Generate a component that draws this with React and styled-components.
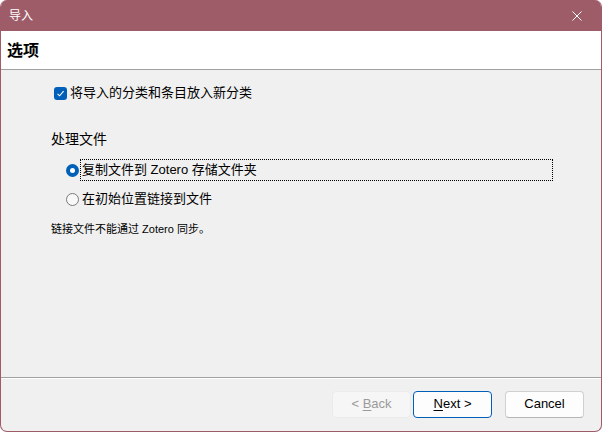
import styled, { createGlobalStyle } from 'styled-components';

const GlobalStyle = createGlobalStyle`
    html, body {
        margin: 0;
        padding: 0;
        background: #ffffff;
    }
    * {
        box-sizing: border-box;
    }
`

const FONT = `"Liberation Sans", "Noto Sans CJK SC", sans-serif`;

export default function App(){
    return(
        <>
            <GlobalStyle />
            <Window>
                <TitleBar>
                    <TitleText>导入</TitleText>
                    <CloseIcon viewBox="0 0 10 10">
                        <path d="M0.5 0.5 L9.5 9.5 M9.5 0.5 L0.5 9.5" stroke="#ffffff" strokeWidth="1" />
                    </CloseIcon>
                </TitleBar>
                <Header>
                    <PageTitle>选项</PageTitle>
                </Header>
                <Body>
                    <CheckRow>
                        <CheckBox>
                            <svg width="9" height="9" viewBox="0 0 9 9">
                                <path d="M1.5 4.8 L3.6 6.8 L7.6 2.2" fill="none" stroke="#ffffff" strokeWidth="1.1" />
                            </svg>
                        </CheckBox>
                        <CheckLabel>将导入的分类和条目放入新分类</CheckLabel>
                    </CheckRow>
                    <GroupLabel>处理文件</GroupLabel>
                    <RadioList>
                        <RadioRow>
                            <Radio checked />
                            <RadioLabel focused>复制文件到 Zotero 存储文件夹</RadioLabel>
                        </RadioRow>
                        <RadioRow>
                            <Radio />
                            <RadioLabel>在初始位置链接到文件</RadioLabel>
                        </RadioRow>
                    </RadioList>
                    <Note>链接文件不能通过 Zotero 同步。</Note>
                </Body>
                <Footer>
                    <Button disabled>&lt; <u>B</u>ack</Button>
                    <Button primary><u>N</u>ext &gt;</Button>
                    <Button spaced>Cancel</Button>
                </Footer>
            </Window>
        </>
    )
}

const Window = styled.div`
    width: 602px;
    height: 432px;
    border: 1px solid #9e5c69;
    border-top: none;
    border-radius: 7px;
    overflow: hidden;
    background: #f0f0f0;
    display: flex;
    flex-direction: column;
    font-family: ${FONT};
`
const TitleBar = styled.div`
    height: 31px;
    margin: 0 -1px;
    background: #9e5c69;
    display: flex;
    align-items: center;
    justify-content: space-between;
    padding: 0 20px 0 9px;
    color: #ffffff;
`
const TitleText = styled.div`
    font-size: 12px;
    line-height: 14px;
`
const CloseIcon = styled.svg`
    width: 10px;
    height: 10px;
`
const Header = styled.div`
    height: 39px;
    background: #ffffff;
    border-bottom: 1px solid #a0a0a0;
    display: flex;
    align-items: center;
    padding: 0 6px 2px;
`
const PageTitle = styled.div`
    font-size: 16px;
    font-weight: bold;
    color: #000000;
`
const Body = styled.div`
    flex: 1;
    padding: 16px 0 0 50px;
    color: #000000;
    border-bottom: 1px solid #a0a0a0;
    box-shadow: 0 1px 0 #ffffff;
`
const CheckRow = styled.div`
    display: flex;
    align-items: center;
    gap: 3px;
    margin-left: 3px;
    height: 14px;
`
const CheckBox = styled.div`
    width: 13px;
    height: 13px;
    border-radius: 3px;
    background: #005fb8;
    display: flex;
    align-items: center;
    justify-content: center;
`
const CheckLabel = styled.div`
    font-size: 13px;
    line-height: 14px;
`
const GroupLabel = styled.div`
    margin-top: 31px;
    font-size: 14px;
    line-height: 16px;
`
const RadioList = styled.div`
    margin: 12px 0 0 15px;
    display: flex;
    flex-direction: column;
    gap: 7px;
`
const RadioRow = styled.div`
    display: flex;
    align-items: center;
    gap: 1px;
    height: 22px;
`
const Radio = styled.div`
    width: 13px;
    height: 13px;
    border-radius: 50%;
    flex: none;
    background: ${props => props.checked ? '#ffffff' : '#f8f8f8'};
    border: ${props => props.checked ? '4px solid #005fb8' : '1px solid #7a7a7a'};
`
const RadioLabel = styled.div`
    font-size: 13px;
    line-height: 16px;
    height: 22px;
    padding: 2px 1px;
    width: ${props => props.focused ? '473px' : 'auto'};
    border: 1px dotted ${props => props.focused ? '#000000' : 'transparent'};
`
const Note = styled.div`
    margin-top: 12px;
    font-size: 11px;
    line-height: 14px;
`
const Footer = styled.div`
    height: 53px;
    display: flex;
    justify-content: flex-end;
    align-items: flex-start;
    padding: 13px 17px 0 0;
    gap: 2px;
`
const Button = styled.button`
    width: 79px;
    height: 27px;
    font-family: ${FONT};
    font-size: 13px;
    border-radius: 4px;
    padding: 0 0 2px;
    margin-left: ${props => props.spaced ? '11px' : '0'};
    color: ${props => props.disabled ? '#9a9a9a' : '#000000'};
    background: ${props => props.disabled ? '#f6f6f6' : '#fdfdfd'};
    border: 1px solid ${props => props.primary ? '#005fb8' : props.disabled ? '#ebebeb' : '#d0d0d0'};
    border-bottom-color: ${props => props.primary ? '#005fb8' : props.disabled ? '#ebebeb' : '#b5b5b5'};
    u {
        text-underline-offset: 2px;
    }
`
